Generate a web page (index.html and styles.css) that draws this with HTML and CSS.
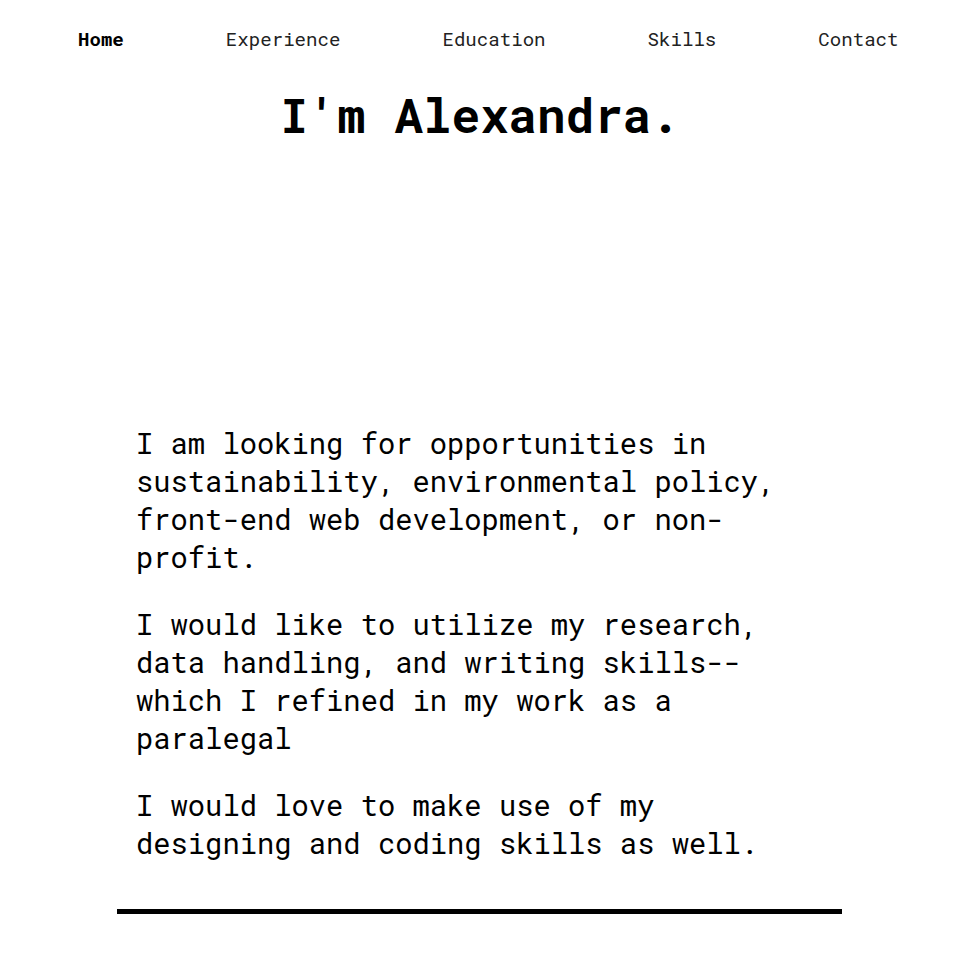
FILE: index.html
```html
<!DOCTYPE html>
<html lang="en">
<head>
<meta charset="utf-8">
<title>Alexandra</title>
<link rel="stylesheet" href="styles.css">
</head>
<body>
<nav class="nav">
  <a class="nav-link active" href="#">Home</a>
  <a class="nav-link" href="#">Experience</a>
  <a class="nav-link" href="#">Education</a>
  <a class="nav-link" href="#">Skills</a>
  <a class="nav-link" href="#">Contact</a>
</nav>
<header class="hero">
  <h1 class="title">I'm Alexandra.</h1>
</header>
<main class="about">
  <div class="about-text">
    <p>I am looking for opportunities in sustainability, environmental policy, front-end web development, or non-profit.</p>
    <p>I would like to utilize my research, data handling, and writing skills--which I refined in my work as a paralegal</p>
    <p>I would love to make use of my designing and coding skills as well.</p>
  </div>
  <hr class="rule">
</main>
</body>
</html>
```
FILE: styles.css
```css
html, body {
  margin: 0;
  padding: 0;
  background: #fff;
}
body {
  font-family: "Roboto Mono", "DejaVu Sans Mono", "Liberation Mono", monospace;
  color: #000;
}
.nav {
  display: flex;
  gap: 102px;
  padding: 27px 0 0 78px;
}
.nav-link {
  font-size: 19.1px;
  line-height: 24px;
  color: #222;
  text-decoration: none;
}
.nav-link.active {
  font-weight: bold;
  color: #000;
}
.hero {
  display: flex;
  justify-content: center;
}
.title {
  margin: 34px 0 0;
  font-size: 47.6px;
  line-height: 60px;
  font-weight: bold;
}
.about {
  padding: 279px 0 0 117px;
}
.about-text {
  padding-left: 19px;
  width: 665px;
}
.about-text p {
  margin: 0 0 29px;
  font-size: 28.8px;
  line-height: 38px;
}
.rule {
  width: 725px;
  margin: 47px 0 0;
  border: 0;
  height: 5px;
  background: #000;
}
```
